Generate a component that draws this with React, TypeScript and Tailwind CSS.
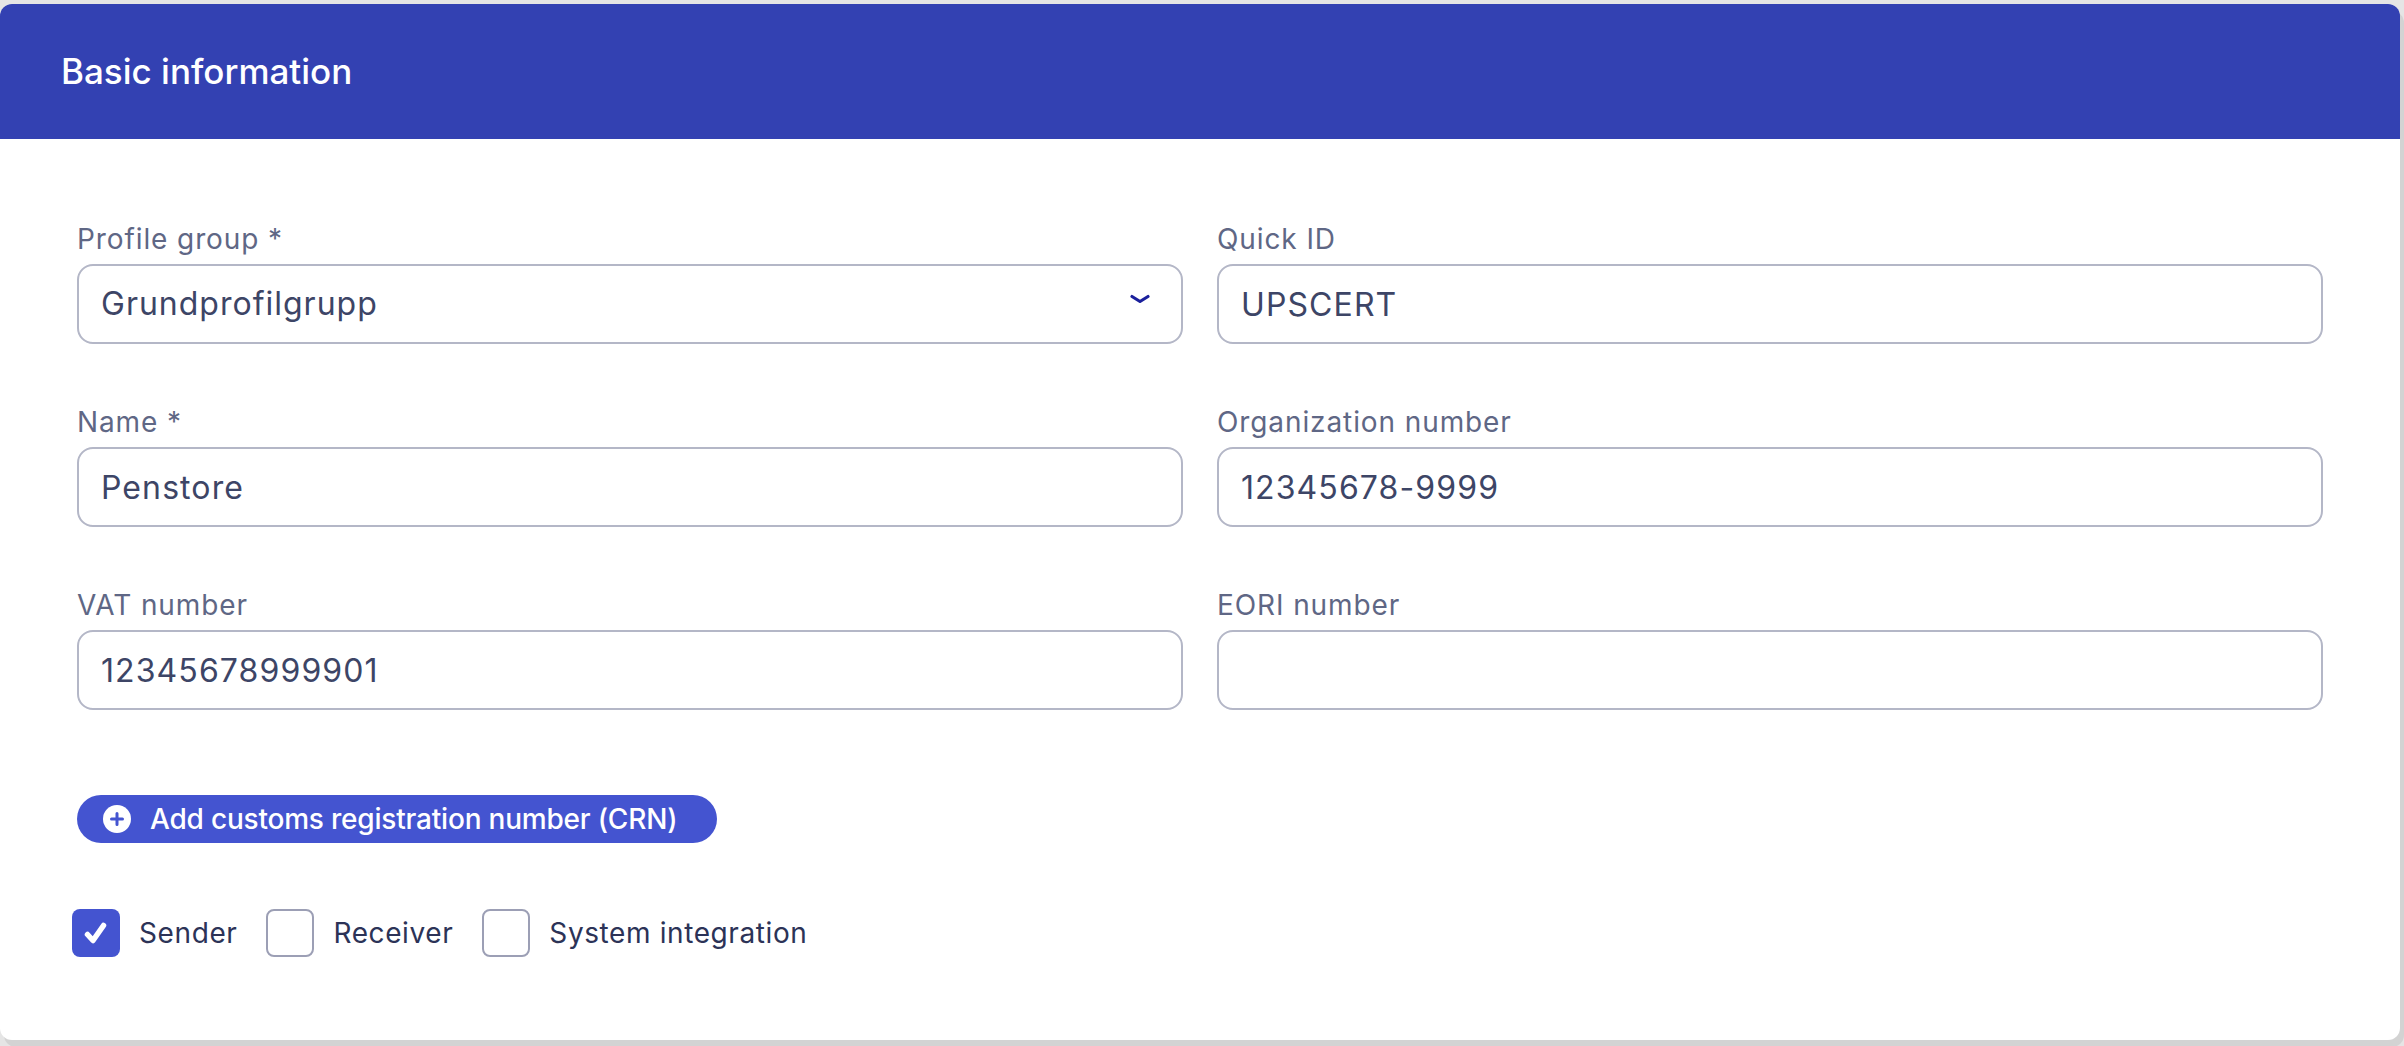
import React from "react";

type Field = { label: string; value: string; select?: boolean };

const fields: Field[] = [
  { label: "Profile group *", value: "Grundprofilgrupp", select: true },
  { label: "Quick ID", value: "UPSCERT" },
  { label: "Name *", value: "Penstore" },
  { label: "Organization number", value: "12345678-9999" },
  { label: "VAT number", value: "12345678999901" },
  { label: "EORI number", value: "" },
];

const roles = [
  { label: "Sender", checked: true },
  { label: "Receiver", checked: false },
  { label: "System integration", checked: false },
];

function ChevronDown() {
  return (
    <svg width="20" height="10" viewBox="0 0 20 10" fill="none">
      <path d="M2 2.5 L10 7.5 L18 2.5" stroke="#1b209c" strokeWidth="3.2" strokeLinecap="round" strokeLinejoin="round" />
    </svg>
  );
}

function PlusCircle() {
  return (
    <svg width="28" height="28" viewBox="0 0 28 28">
      <circle cx="14" cy="14" r="14" fill="#ffffff" />
      <path d="M14 8.5 V19.5 M8.5 14 H19.5" stroke="#4454d0" strokeWidth="3" strokeLinecap="round" />
    </svg>
  );
}

function CheckMark() {
  return (
    <svg width="26" height="24" viewBox="0 0 26 24" fill="none">
      <path d="M4.5 13.5 L10 19.5 L20.5 4.5" stroke="#ffffff" strokeWidth="5.5" strokeLinecap="round" strokeLinejoin="round" />
    </svg>
  );
}

function FormField({ field }: { field: Field }) {
  return (
    <div className="flex flex-col">
      <label className="mb-[5px] text-[28px] leading-[40px] tracking-[0.9px] text-[#5f6785]">{field.label}</label>
      {field.select ? (
        <div className="flex h-[80px] items-center justify-between rounded-[16px] border-2 border-[#b4b7c7] bg-white pl-[22px] pr-[31px]">
          <span className="text-[32px] tracking-[1px] text-[#3d4566]">{field.value}</span>
          <span className="-mt-[10px]">
            <ChevronDown />
          </span>
        </div>
      ) : (
        <input
          readOnly
          defaultValue={field.value}
          className="h-[80px] w-full rounded-[16px] border-2 border-[#b4b7c7] bg-white px-[22px] text-[32px] tracking-[1.1px] text-[#3d4566] outline-none"
        />
      )}
    </div>
  );
}

export default function App() {
  return (
    <div className="min-h-screen bg-[#e5e5e5] pt-[4px] font-['Inter',sans-serif]">
      <div className="w-[2400px] overflow-hidden rounded-[12px] bg-white shadow-[4px_7px_0_0_#d3d3d3]">
        <div className="flex h-[135px] items-center bg-[#3341b2] px-[61px]">
          <h2 className="text-[35px] font-medium text-white">Basic information</h2>
        </div>

        <div className="px-[77px] pb-[83px] pt-[80px]">
          <div className="grid grid-cols-2 gap-x-[34px] gap-y-[58px]">
            {fields.map((f) => (
              <FormField key={f.label} field={f} />
            ))}
          </div>

          <button className="mt-[85px] flex h-[48px] items-center gap-[19px] rounded-full bg-[#4454d0] pl-[26px] pr-[40px] text-[28px] font-medium tracking-[-0.2px] text-white">
            <PlusCircle />
            Add customs registration number (CRN)
          </button>

          <div className="-ml-[5px] mt-[66px] flex items-center gap-[29px]">
            {roles.map((r) => (
              <div key={r.label} className="flex items-center gap-[19px]">
                {r.checked ? (
                  <span className="flex h-[48px] w-[48px] items-center justify-center rounded-[8px] bg-[#4454d0]">
                    <CheckMark />
                  </span>
                ) : (
                  <span className="h-[48px] w-[48px] rounded-[8px] border-2 border-[#9c9fb5] bg-white" />
                )}
                <span className="text-[28px] tracking-[0.6px] text-[#2c3357]">{r.label}</span>
              </div>
            ))}
          </div>
        </div>
      </div>
    </div>
  );
}
